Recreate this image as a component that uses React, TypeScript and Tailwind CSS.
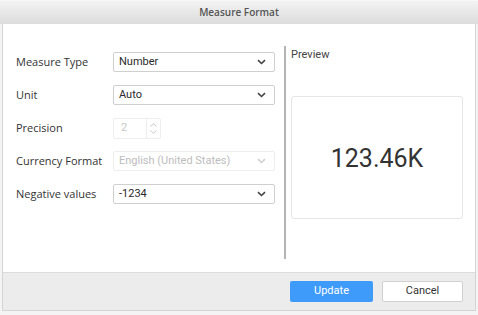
import React from "react";

const Chevron = ({ color = "#444" }: { color?: string }) => (
  <svg width="9" height="6" viewBox="0 0 9 6" className="shrink-0">
    <path d="M1 1.2 L4.5 4.5 L8 1.2" fill="none" stroke={color} strokeWidth="1.6" />
  </svg>
);

const Select = ({ value, disabled = false }: { value: string; disabled?: boolean }) => (
  <div
    className={`w-[162px] h-[20px] flex items-center justify-between pl-[5px] pr-[8px] rounded-[2px] border ${
      disabled ? "border-[#eeeeee] text-[#bdbdbd]" : "border-[#cfcfcf] text-[#2a2a2a]"
    } text-[11px]`}
    style={{ fontFamily: "Roboto, sans-serif" }}
  >
    <span>{value}</span>
    <Chevron color={disabled ? "#d0d0d0" : "#444"} />
  </div>
);

const Row = ({ label, children }: { label: string; children: React.ReactNode }) => (
  <div className="flex items-center h-[20px]">
    <div className="w-[97px] text-[11px] text-[#333]" style={{ fontFamily: "'Open Sans', sans-serif" }}>
      {label}
    </div>
    {children}
  </div>
);

export default function App() {
  return (
    <div className="w-[478px] h-[315px] bg-[#f4f4f4] flex flex-col overflow-hidden">
      <div className="h-[24px] shrink-0 border-t border-[#f8f8f8] bg-gradient-to-b from-[#f3f3f3] to-[#dcdcdc] flex items-center justify-center">
        <span className="text-[10px] text-[#555] font-semibold" style={{ fontFamily: "'Open Sans', sans-serif" }}>
          Measure Format
        </span>
      </div>
      <div className="flex flex-col flex-1 mx-[2px] border-l border-r border-b border-[#d4d4d4]">
        <div className="h-[249px] bg-white flex border-b border-[#dcdcdc]">
          <div className="w-[281px] pl-[13px] pt-[28px] flex flex-col gap-[13px]">
            <Row label="Measure Type">
              <Select value="Number" />
            </Row>
            <Row label="Unit">
              <Select value="Auto" />
            </Row>
            <Row label="Precision">
              <div className="w-[48px] h-[21px] border border-[#eeeeee] rounded-[2px] flex text-[11px] text-[#c8c8c8]" style={{ fontFamily: "Roboto, sans-serif" }}>
                <div className="w-[33px] pl-[7px] flex items-center border-r border-[#eeeeee]">2</div>
                <div className="flex-1 flex flex-col items-center justify-center gap-[3px]">
                  <svg width="7" height="4" viewBox="0 0 7 4"><path d="M0.5 3.5 L3.5 0.8 L6.5 3.5" fill="none" stroke="#c8c8c8" strokeWidth="1" /></svg>
                  <svg width="7" height="4" viewBox="0 0 7 4"><path d="M0.5 0.5 L3.5 3.2 L6.5 0.5" fill="none" stroke="#c8c8c8" strokeWidth="1" /></svg>
                </div>
              </div>
            </Row>
            <Row label="Currency Format">
              <Select value="English (United States)" disabled />
            </Row>
            <Row label="Negative values">
              <Select value="-1234" />
            </Row>
          </div>
          <div className="w-[2px] bg-[#b4b4b4] mt-[22px] mb-[13px]" />
          <div className="flex-1 pl-[5px] pr-[12px] pt-[24px] flex flex-col">
            <div className="text-[11px] leading-[13px] text-[#444]" style={{ fontFamily: "Roboto, sans-serif" }}>
              Preview
            </div>
            <div className="mt-[35px] h-[123px] border border-[#e6e6e6] rounded-[3px] flex items-center justify-center">
              <span className="text-[25px] text-[#333] mt-[2px]" style={{ fontFamily: "Roboto, sans-serif" }}>
                123.46K
              </span>
            </div>
          </div>
        </div>
        <div className="flex-1 bg-[#ececec] flex items-start justify-end gap-[9px] pr-[12px] pt-[8px]">
          <button className="w-[83px] h-[21px] rounded-[2px] bg-[#3f9bfa] text-white text-[11px]" style={{ fontFamily: "Roboto, sans-serif" }}>
            Update
          </button>
          <button className="w-[81px] h-[21px] rounded-[2px] bg-white border border-[#d0d0d0] text-[#333] text-[11px]" style={{ fontFamily: "Roboto, sans-serif" }}>
            Cancel
          </button>
        </div>
      </div>
      <div className="h-[4px] shrink-0" />
    </div>
  );
}
